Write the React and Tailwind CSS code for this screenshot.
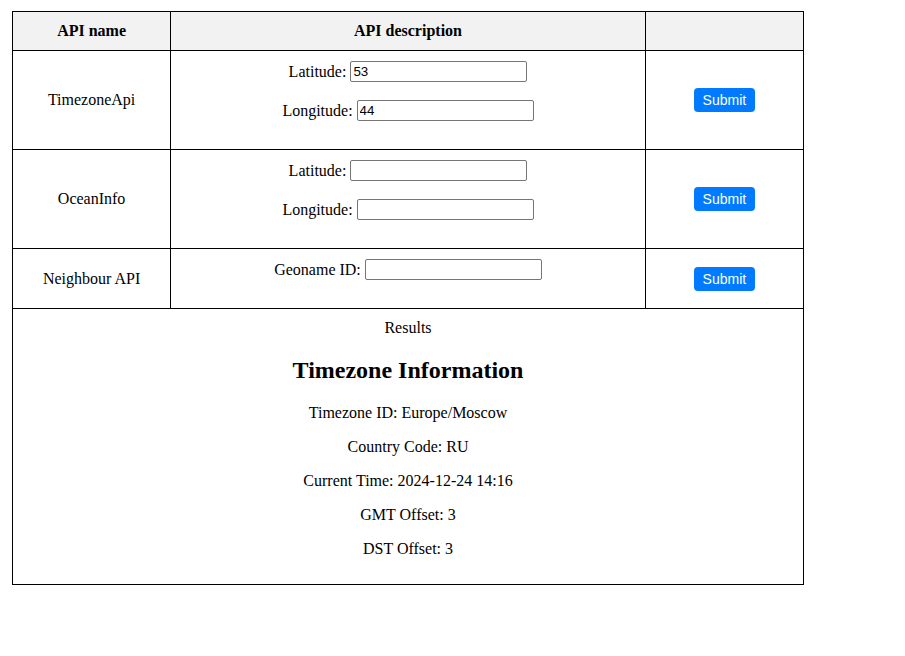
import React, { useState } from 'react';

const serif = { fontFamily: '"Liberation Serif", "Times New Roman", serif' };

// поле ввода с подписью
const Field = ({ label, value, onChange }) => (
  <div className="flex h-[21px] items-center justify-center mb-[18px]">
    <span>{label}</span>
    <input
      type="text"
      value={value}
      onChange={(e) => onChange(e.target.value)}
      className="ml-[4px] w-[177px] h-[21px] border border-[#767676] rounded-[2px] px-[2px] bg-white text-black text-[13.33px] font-['Liberation_Sans',Arial,sans-serif] outline-none"
    />
  </div>
);

const SubmitButton = () => (
  <button className="bg-[#007bff] text-white rounded-[4px] px-[9px] h-[24px] text-[14px] leading-[16px] font-['Liberation_Sans',Arial,sans-serif]">
    Submit
  </button>
);

const App = () => {
  const [tzLat, setTzLat] = useState('53');
  const [tzLng, setTzLng] = useState('44');
  const [oceanLat, setOceanLat] = useState('');
  const [oceanLng, setOceanLng] = useState('');
  const [geonameId, setGeonameId] = useState('');

  const result = {
    timezoneId: 'Europe/Moscow',
    countryCode: 'RU',
    time: '2024-12-24 14:16',
    gmtOffset: 3,
    dstOffset: 3,
  };

  const cell = 'border border-black p-[10px]';

  return (
    <div className="min-h-[656px] bg-white text-black text-[16px] leading-[normal]" style={serif}>
      <div className="pl-3 pt-[11px]">
        <table className="w-[792px] border-collapse table-fixed">
          <thead>
            <tr className="bg-[#f2f2f2]">
              <th className={`${cell} w-[20%] font-bold text-center`}>API name</th>
              <th className={`${cell} w-[60%] font-bold text-center`}>API description</th>
              <th className={`${cell} w-[20%]`}></th>
            </tr>
          </thead>
          <tbody>
            <tr>
              <td className={`${cell} text-center align-middle`}>TimezoneApi</td>
              <td className={`${cell} text-center align-top`}>
                <Field label="Latitude:" value={tzLat} onChange={setTzLat} />
                <Field label="Longitude:" value={tzLng} onChange={setTzLng} />
              </td>
              <td className={`${cell} text-center align-middle`}>
                <SubmitButton />
              </td>
            </tr>
            <tr>
              <td className={`${cell} text-center align-middle`}>OceanInfo</td>
              <td className={`${cell} text-center align-top`}>
                <Field label="Latitude:" value={oceanLat} onChange={setOceanLat} />
                <Field label="Longitude:" value={oceanLng} onChange={setOceanLng} />
              </td>
              <td className={`${cell} text-center align-middle`}>
                <SubmitButton />
              </td>
            </tr>
            <tr>
              <td className={`${cell} text-center align-middle`}>Neighbour API</td>
              <td className={`${cell} text-center align-top`}>
                <Field label="Geoname ID:" value={geonameId} onChange={setGeonameId} />
              </td>
              <td className={`${cell} text-center align-middle`}>
                <SubmitButton />
              </td>
            </tr>
            <tr>
              <td colSpan={3} className={`${cell} text-center`}>
                <div>Results</div>
                <h2 className="text-[24px] font-bold my-[20px]">Timezone Information</h2>
                <p className="my-4">Timezone ID: {result.timezoneId}</p>
                <p className="my-4">Country Code: {result.countryCode}</p>
                <p className="my-4">Current Time: {result.time}</p>
                <p className="my-4">GMT Offset: {result.gmtOffset}</p>
                <p className="my-4">DST Offset: {result.dstOffset}</p>
              </td>
            </tr>
          </tbody>
        </table>
      </div>
    </div>
  );
};

export default App;
